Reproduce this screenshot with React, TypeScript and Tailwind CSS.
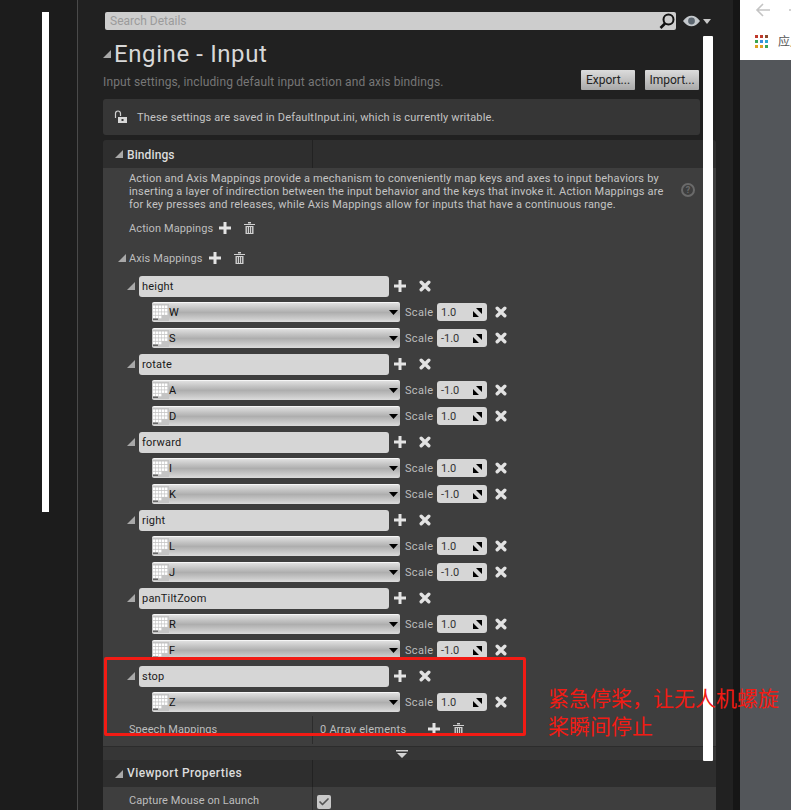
import { Check } from "lucide-react";

const grupos = [
    { nombre: "height", teclas: [["W", "1.0"], ["S", "-1.0"]] },
    { nombre: "rotate", teclas: [["A", "-1.0"], ["D", "1.0"]] },
    { nombre: "forward", teclas: [["I", "1.0"], ["K", "-1.0"]] },
    { nombre: "right", teclas: [["L", "1.0"], ["J", "-1.0"]] },
    { nombre: "panTiltZoom", teclas: [["R", "1.0"], ["F", "-1.0"]] },
    { nombre: "stop", teclas: [["Z", "1.0"]] },
];

function Triangulo({ className = "" }: { className?: string }) {
    return (
        <svg width="8" height="8" viewBox="0 0 8 8" className={className}>
            <path d="M8 0V8H0Z" fill="#a8a8a8" />
        </svg>
    );
}

function Mas({ color = "#e4e4e4" }: { color?: string }) {
    return (
        <svg width="12" height="12" viewBox="0 0 12 12" className="shrink-0">
            <path d="M4.5 0h3v4.5H12v3H7.5V12h-3V7.5H0v-3h4.5z" fill={color} />
        </svg>
    );
}

function Cruz() {
    return (
        <svg width="12" height="12" viewBox="0 0 12 12" className="shrink-0">
            <path d="M2.2 2.2l7.6 7.6M9.8 2.2l-7.6 7.6" stroke="#e2e2e2" strokeWidth="3.4" strokeLinecap="round" />
        </svg>
    );
}

function Papelera() {
    return (
        <svg width="11" height="12" viewBox="0 0 11 12" className="shrink-0">
            <path d="M0 2h11v1H0zM4 0h3v1.5H4z" fill="#d0d0d0" />
            <path d="M1.5 4h8v8h-8z" fill="#d0d0d0" />
            <path d="M3.4 5v6M5.5 5v6M7.6 5v6" stroke="#3e3e3e" strokeWidth="0.9" />
        </svg>
    );
}

function Teclado() {
    const celdas = [];
    for (let f = 0; f < 4; f++) {
        for (let c = 0; c < 5; c++) {
            if (f === 3 && c > 2) continue;
            celdas.push(<rect key={`${f}-${c}`} x={1 + c * 3} y={1.5 + f * 3.4} width="2.4" height="2.6" fill="#ffffff" />);
        }
    }
    return (
        <svg width="17" height="17" viewBox="0 0 17 17" className="shrink-0">
            <rect x="0" y="0" width="17" height="17" fill="#c4c4c4" />
            {celdas}
            <rect x="1" y="14.5" width="5" height="1.5" fill="#666" />
        </svg>
    );
}

function FilaTecla({ tecla, escala }: { tecla: string; escala: string }) {
    return (
        <div className="h-[26px] pb-[2px] flex items-center pl-[49px]">
            <div className="w-[248px] h-[20px] flex items-center rounded-[2px] border-t border-[#f6f6f6] bg-linear-to-b from-[#e0e0e0] via-[#aeaeae] to-[#dcdcdc]">
                <Teclado />
                <span className="pt-[2px] text-[11px] text-[#111]">{tecla}</span>
                <svg width="9" height="5" viewBox="0 0 9 5" className="ml-auto mr-[2px]">
                    <path d="M0 0h9L4.5 5z" fill="#000" />
                </svg>
            </div>
            <span className="ml-[5px] w-[32px] pt-[2px] text-[11px] tracking-[0.3px] text-[#bdbdbd]">Scale</span>
            <div className="w-[50px] h-[18px] rounded-[3px] bg-[#d6d6d6] flex items-center justify-between pl-[4px] pr-[5px]">
                <span className="pt-[2px] text-[11px] text-[#333]">{escala}</span>
                <svg width="9" height="9" viewBox="0 0 9 9">
                    <path d="M9 0v6L3 0zM0 9V3l6 6z" fill="#000" />
                </svg>
            </div>
            <div className="ml-[8px]"><Cruz /></div>
        </div>
    );
}

export default function App() {
    return (
        <div className="relative w-[791px] h-[810px] overflow-hidden flex bg-[#1c1c1c] font-['Roboto',sans-serif]">
            {/* Columna izquierda */}
            <div className="w-[77px] shrink-0 bg-[#1c1c1c] border-r border-[#4a4a4a] box-content" />

            {/* Panel de detalles */}
            <div className="w-[655px] shrink-0 bg-[#212121] pl-[25px] pr-[17px] pt-[12px]">
                <div className="flex items-center">
                    <div className="ml-[2px] w-[571px] h-[18px] rounded-[2px] bg-[#cdcdcd] flex items-center justify-between px-[5px] pr-[1px]">
                        <span className="text-[12px] text-[#9b9b9b]">Search Details</span>
                        <svg width="16" height="16" viewBox="0 0 16 16">
                            <circle cx="9.5" cy="6.5" r="5" fill="none" stroke="#111" strokeWidth="2" />
                            <path d="M6 10.5L1.5 15" stroke="#111" strokeWidth="2.6" />
                        </svg>
                    </div>
                    <svg width="30" height="12" viewBox="0 0 30 12" className="ml-[7px]">
                        <path d="M0 6C5-1 12-1 17 6 12 13 5 13 0 6Z" fill="#c4c8cc" />
                        <circle cx="8.5" cy="6" r="3.4" fill="#5c6670" />
                        <path d="M20 4h8l-4 5z" fill="#c8c8c8" />
                    </svg>
                </div>

                {/* Titulo */}
                <div className="h-[69px] flex justify-between pr-[17px]">
                    <div>
                        <div className="flex items-center mt-[11px] h-[27px]">
                            <Triangulo className="mr-[3px] mb-[2px]" />
                            <h1 className="text-[24px] leading-[27px] text-[#d8d8d8] tracking-[0.6px]">Engine - Input</h1>
                        </div>
                        <p className="mt-[7px] text-[12px] leading-[14px] tracking-[0.13px] text-[#777777]">
                            Input settings, including default input action and axis bindings.
                        </p>
                    </div>
                    <div className="flex gap-[10px] mt-[40px]">
                        <button className="w-[54px] h-[20px] text-[12px] text-[#222] rounded-[1px] bg-linear-to-b from-[#dcdcdc] to-[#a9a9a9]">Export...</button>
                        <button className="w-[54px] h-[20px] text-[12px] text-[#222] rounded-[1px] bg-linear-to-b from-[#dcdcdc] to-[#a9a9a9]">Import...</button>
                    </div>
                </div>

                {/* Aviso */}
                <div className="h-[36px] w-[597px] rounded-[3px] bg-[#363636] flex items-center pl-[11px]">
                    <svg width="14" height="14" viewBox="0 0 14 14">
                        <path d="M1.5 8V3.5a2.5 2.5 0 0 1 5 0V6" fill="none" stroke="#d0d0d0" strokeWidth="1.2" />
                        <path d="M4 7h9v6H4z" fill="#d8d8d8" />
                        <path d="M7.5 9h2v2h-2z" fill="#363636" />
                    </svg>
                    <span className="ml-[9px] pt-[3px] text-[11px] tracking-[0.17px] text-[#c4c4c4]">
                        These settings are saved in DefaultInput.ini, which is currently writable.
                    </span>
                </div>

                {/* Bindings */}
                <div className="mt-[5px] w-[613px]">
                    <div className="h-[28px] rounded-t-[3px] bg-[#2e2e2e] flex items-center">
                        <div className="w-[210px] h-full flex items-center pl-[12px] border-r border-[#222]">
                            <Triangulo className="mr-[4px]" />
                            <span className="pt-[2px] text-[12px] font-medium tracking-[0.1px] text-[#dcdcdc]">Bindings</span>
                        </div>
                    </div>
                    <div className="bg-[#3e3e3e] h-[578px]">
                        <div className="relative pl-[26px] pt-[4px] h-[45px] text-[11px] leading-[13px] tracking-[0.18px] text-[#c4c4c4]">
                            <p>Action and Axis Mappings provide a mechanism to conveniently map keys and axes to input behaviors by</p>
                            <p>inserting a layer of indirection between the input behavior and the keys that invoke it. Action Mappings are</p>
                            <p>for key presses and releases, while Axis Mappings allow for inputs that have a continuous range.</p>
                            <div className="absolute left-[578px] top-[15px] w-[14px] h-[14px] rounded-full border-2 border-[#6a6a6a] text-[#6a6a6a] text-[9px] leading-[10px] text-center font-bold">?</div>
                        </div>
                        <div className="h-[32px] flex items-center pl-[26px] text-[11px] tracking-[0.1px] text-[#bdbdbd]">
                            <span className="w-[90px]">Action Mappings</span>
                            <div className="mb-[2px]"><Mas /></div>
                            <div className="ml-[13px] mb-[2px]"><Papelera /></div>
                        </div>
                        <div className="h-[29px] flex items-center pl-[15px] text-[11px] tracking-[0.1px] text-[#bdbdbd]">
                            <Triangulo className="mr-[3px] mb-[4px]" />
                            <span className="w-[80px]">Axis Mappings</span>
                            <div className="mb-[3px]"><Mas /></div>
                            <div className="ml-[13px] mb-[3px]"><Papelera /></div>
                        </div>

                        {grupos.map((grupo) => (
                            <div key={grupo.nombre}>
                                <div className="h-[26px] pb-[2px] flex items-center pl-[24px]">
                                    <Triangulo className="mr-[4px] mb-[1px]" />
                                    <div className="w-[250px] h-[21px] pt-[2px] rounded-[3px] bg-[#d6d6d6] flex items-center pl-[3px] text-[11px] tracking-[0.2px] text-[#1a1a1a]">
                                        {grupo.nombre}
                                    </div>
                                    <div className="ml-[5px]"><Mas /></div>
                                    <div className="ml-[13px]"><Cruz /></div>
                                </div>
                                {grupo.teclas.map(([tecla, escala]) => (
                                    <FilaTecla key={tecla} tecla={tecla} escala={escala} />
                                ))}
                            </div>
                        ))}

                        <div className="h-[28px] flex items-start text-[11px] text-[#bdbdbd]">
                            <div className="w-[210px] h-full pl-[26px] pt-[6px] tracking-[0.05px] border-r border-[#2c2c2c]">Speech Mappings</div>
                            <span className="ml-[7px] pt-[6px] w-[108px] tracking-[0.25px]">0 Array elements</span>
                            <div className="mt-[7px]"><Mas /></div>
                            <div className="ml-[13px] mt-[7px]"><Papelera /></div>
                        </div>
                    </div>
                    <div className="h-[14px] bg-[#363636] border-t border-[#2c2c2c] flex items-center justify-center pr-[16px]">
                        <svg width="12" height="8" viewBox="0 0 12 8">
                            <path d="M0 0h12v1.5H0zM1 3h10L6 8z" fill="#d4d4d4" />
                        </svg>
                    </div>

                    {/* Viewport Properties */}
                    <div className="h-[27px] bg-[#2e2e2e] flex items-center">
                        <div className="w-[210px] h-full flex items-center pl-[12px] border-r border-[#222]">
                            <Triangulo className="mr-[4px]" />
                            <span className="pb-[1px] text-[12px] font-medium tracking-[0.42px] text-[#dcdcdc]">Viewport Properties</span>
                        </div>
                    </div>
                    <div className="h-[30px] bg-[#3e3e3e] flex items-center text-[11px] tracking-[0.08px] text-[#bdbdbd]">
                        <div className="w-[210px] h-full pl-[26px] pb-[2px] flex items-center border-r border-[#2c2c2c]">Capture Mouse on Launch</div>
                        <div className="ml-[4px] w-[14px] h-[14px] rounded-[2px] bg-[#c8c8c8] flex items-center justify-center">
                            <Check size={12} strokeWidth={3.5} color="#555" />
                        </div>
                    </div>
                </div>
            </div>

            {/* Borde entre ventanas */}
            <div className="w-[7px] shrink-0 bg-[#161616]" />

            {/* Navegador detras */}
            <div className="flex-1 bg-[#53565a]">
                <div className="h-[60px] bg-white pl-[15px] pt-[3px] overflow-hidden">
                    <div className="flex items-center gap-[17px]">
                        <svg width="16" height="14" viewBox="0 0 16 14" className="shrink-0">
                            <path d="M15 7H2M8 1L2 7l6 6" fill="none" stroke="#c4c4c4" strokeWidth="1.6" />
                        </svg>
                        <svg width="16" height="14" viewBox="0 0 16 14" className="shrink-0">
                            <path d="M1 7h13M8 1l6 6-6 6" fill="none" stroke="#c4c4c4" strokeWidth="1.6" />
                        </svg>
                    </div>
                    <div className="flex items-center mt-[15px]">
                        <div className="grid grid-cols-3 gap-[2px] w-[13px] shrink-0">
                            <span className="w-[3px] h-[3px] bg-[#c0392b]" />
                            <span className="w-[3px] h-[3px] bg-[#c0392b]" />
                            <span className="w-[3px] h-[3px] bg-[#8a4a2a]" />
                            <span className="w-[3px] h-[3px] bg-[#3aa655]" />
                            <span className="w-[3px] h-[3px] bg-[#3b8ee0]" />
                            <span className="w-[3px] h-[3px] bg-[#2fa8d0]" />
                            <span className="w-[3px] h-[3px] bg-[#e0a020]" />
                            <span className="w-[3px] h-[3px] bg-[#e0a020]" />
                            <span className="w-[3px] h-[3px] bg-[#3aa655]" />
                        </div>
                        <span className="ml-[10px] text-[12px] whitespace-nowrap text-[#555] font-['Noto_Sans_CJK_SC',sans-serif]">应用</span>
                    </div>
                </div>
            </div>

            {/* Barras de desplazamiento blancas */}
            <div className="absolute left-[42px] top-[12px] w-[7px] h-[500px] bg-white" />
            <div className="absolute left-[703px] top-[36px] w-[10px] h-[725px] bg-white rounded-[1px]" />

            {/* Anotacion */}
            <div className="absolute left-[104px] top-[657px] w-[422px] h-[79px] border-[3px] border-[#f21b14] rounded-[2px]" />
            <div className="absolute left-[548px] top-[683px] w-[236px] text-[21px] leading-[28px] text-[#f21b14] font-['Noto_Sans_CJK_SC',sans-serif] font-normal">
                紧急停桨，让无人机螺旋桨瞬间停止
            </div>
        </div>
    );
}
